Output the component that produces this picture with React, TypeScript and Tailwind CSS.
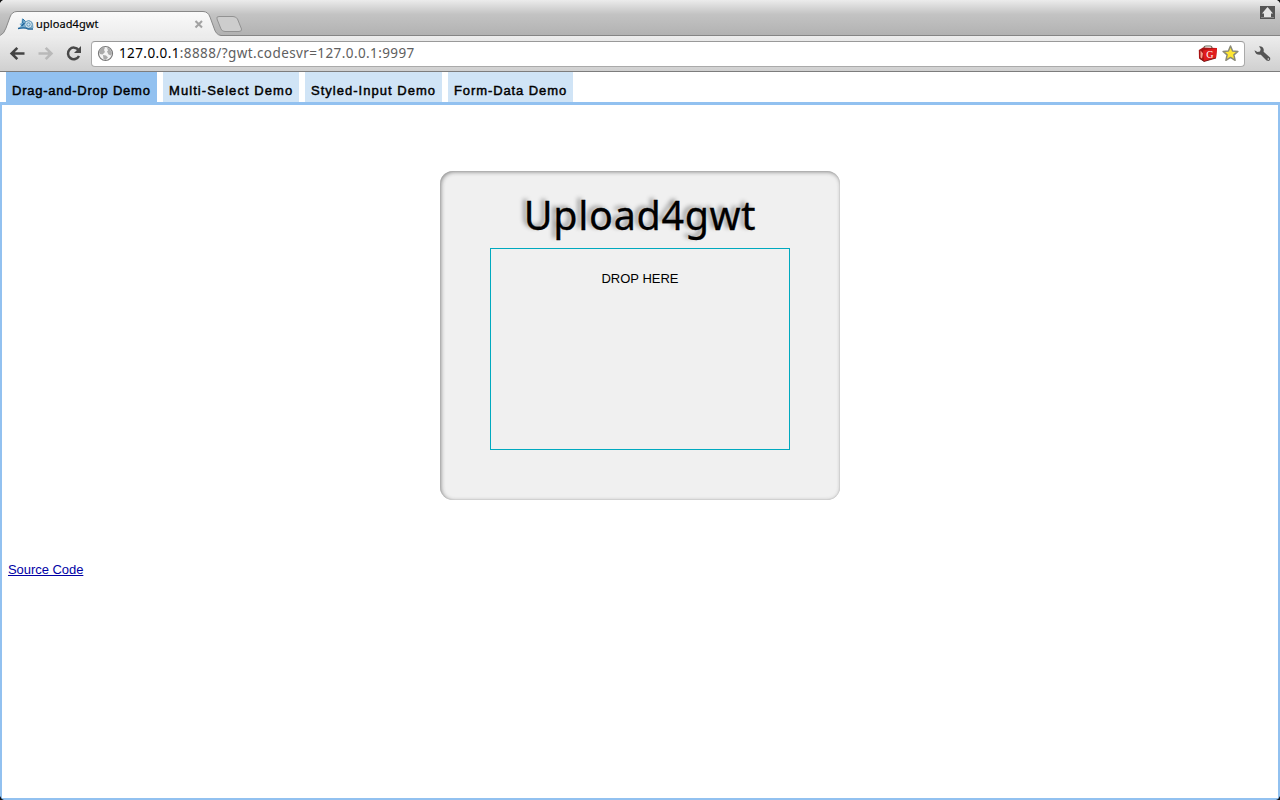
import React from "react";

const tabs = [
  { label: "Drag-and-Drop Demo", style: "w-[151px] bg-[#92c1f0] tracking-[0.76px]" },
  { label: "Multi-Select Demo", style: "w-[136px] bg-[#d0e4f6] tracking-[1.06px]" },
  { label: "Styled-Input Demo", style: "w-[137px] bg-[#d0e4f6] tracking-[1.02px]" },
  { label: "Form-Data Demo", style: "w-[125px] bg-[#d0e4f6] tracking-[0.9px]" },
];

function TabStrip() {
  return (
    <div className="relative h-9 bg-linear-to-b from-[#ececec] via-[#c3c3c3] via-40% to-[#b1b1b1]">
      <svg className="absolute inset-0" width="1280" height="36" viewBox="0 0 1280 36">
        <defs>
          <linearGradient id="tab" x1="0" y1="0" x2="0" y2="1">
            <stop offset="0" stopColor="#fafafa" />
            <stop offset="1" stopColor="#ececec" />
          </linearGradient>
        </defs>
        <path d="M0 0h3Q1 1 0 3zM1280 0h-3Q1279 1 1280 3z" fill="#111" />
        <path d="M0 35.5H1280" stroke="#858585" />
        <path d="M0 36V35Q4 34 6 28L10 17Q12 11.500 17 11.500H203Q208 11.500 210 17L214 28Q216 35 221 35.500V36z" fill="url(#tab)" />
        <path d="M0 35.500Q4 34 6 28L10 17Q12 11.500 17 11.500H203Q208 11.500 210 17L214 28Q216 35 221 35.500" fill="none" stroke="#888" />
        <path d="M219 16.500H233Q236 16.500 237.500 19L241.500 29Q242 31.500 239 31.500H225Q222 31.500 221 29L217 19Q216 16.500 219 16.500z" fill="#cdcdcd" stroke="#929292" />
        <path d="m195.500 21 6.500 6.500m0-6.500-6.500 6.500" stroke="#a2a2a2" strokeWidth="2.100" />
        <rect x="1260" y="6" width="15" height="13" fill="#555" />
        <path d="m1267.500 7 5.500 6.500h-2v3.500h-7v-3.500h-2z" fill="#e5e5e5" />
        <path d="M1261 17.500H1274" stroke="#888" />
        <g>
          <path d="m18.500 28.500 2.500-3-1.500-1.500 2-1 .5-5 4 3.500 3-1.500 4 3 .5 5z" fill="#78aed0" />
          <path d="m22.500 23 .5-4 3 3" stroke="#3077a8" fill="none" />
          <circle cx="28.500" cy="24.500" r="3.800" fill="#cfe2ee" stroke="#6d9cba" />
          <circle cx="28.500" cy="24.500" r="1.700" fill="none" stroke="#5b95ba" />
          <path d="M18 28.500q7-1.500 10 .5h5M21.500 26l3-3" stroke="#1f649a" strokeWidth="1.300" fill="none" />
        </g>
      </svg>
      <div className="relative pt-[17px] pl-9 font-['Noto_Sans','Open_Sans',sans-serif] text-[11px] leading-[14px] tracking-[0.1px] text-black [-webkit-text-stroke:0.15px_black]">upload4gwt</div>
    </div>
  );
}

function Toolbar() {
  return (
    <div className="flex h-9 items-center border-b border-[#7d7d7d] bg-linear-to-b from-[#ededed] to-[#d0d0d0]">
      <svg className="shrink-0" width="91" height="35" viewBox="0 36 91 35" fill="none">
        <path d="M24.500 53.500H12M17.300 47.800 11.600 53.500 17.300 59.200" stroke="#444" strokeWidth="2.600" />
        <path d="M38.500 53.500H51M45.700 47.800 51.400 53.500 45.700 59.200" stroke="#b9b9b9" strokeWidth="2.600" />
        <path d="M78.500 50A5.800 5.800 0 1 0 79 56" stroke="#484848" strokeWidth="2.500" />
        <path d="M81 46V53H74z" fill="#484848" />
      </svg>
      <div className="flex h-[26px] w-[1154px] items-center rounded-[4px] border border-[#aaa] border-t-[#999] bg-white">
        <svg className="ml-[5px] shrink-0" width="17" height="17" viewBox="0 0 17 17">
          <circle cx="8.500" cy="8.500" r="7" fill="#f4f4f4" stroke="#777" strokeWidth="1.200" />
          <path d="M3 4 6 2 8 2.500 7 5 8 7 5.500 9.500 3 9 2 7zM10 2.500l3 1.500 2 4-1 2.500-2.500-1L10 6.500l1-1zM6 10l3 .5 2 2-2.500 2.500-2-1z" fill="#aaa" />
        </svg>
        <div className="-mt-px ml-[5px] whitespace-nowrap font-['Noto_Sans','Open_Sans',sans-serif] text-[13.5px] leading-[18px] tracking-[0.4px] text-[#606060]">
          <span className="text-black">127.0.0.1</span>:8888/?gwt.codesvr=127.0.0.1:9997
        </div>
        <svg className="mr-[4px] ml-auto shrink-0" width="42" height="22" viewBox="0 0 42 22">
          <path d="M6 5.500V4.500Q6 3 8 3h4q2 0 2 2" fill="none" stroke="#665" strokeWidth="1.200" />
          <path d="m.8 7 4.200-2.500 14 .5-1 10-12 3.500-5-3z" fill="#a91414" />
          <path d="m5 7.500 14-2.500-1 10-12 3.500z" fill="#e01c1c" />
          <path d="m2.500 7.500 2.500 3-1 5-1.500-1z" fill="#f7a08c" />
          <path d="m2 15.500 4 3 12-3.500" fill="none" stroke="#651313" strokeWidth=".8" />
          <text x="8.200" y="14.500" fill="#fff" fontFamily="Liberation Serif, serif" fontSize="10">G</text>
          <path d="m32.500 3 2.100 5 5.300.4-4 3.500 1.200 5.400-4.600-2.900-4.600 2.900 1.200-5.400-4-3.500 5.300-.4z" fill="#ffe733" stroke="#8a8a78" strokeWidth="1.500" strokeLinejoin="round" />
        </svg>
      </div>
      <svg className="ml-[9px] shrink-0" width="18" height="18" viewBox="0 0 18 18">
        <path d="M5 1.200Q9.500 1 9.800 5L9.600 6.800 16 12.500Q17 15 14.500 16L12.500 15.500 6.800 9.700Q1.500 10.500.5 5.200L3.500 7 6 6.500 6.700 4z" fill="#555" />
        <circle cx="14.300" cy="14.100" r=".8" fill="#ddd" />
      </svg>
    </div>
  );
}

export default function App() {
  return (
    <div className="flex h-[800px] w-[1280px] flex-col overflow-hidden bg-white font-['Liberation_Sans',Arial,sans-serif] text-black">
      <TabStrip />
      <Toolbar />
      <nav className="flex h-[30px] shrink-0 gap-1.5 pl-1.5">
        {tabs.map((tab) => (
          <div key={tab.label} className={`${tab.style} shrink-0 whitespace-nowrap pt-[11px] pl-1.5 text-[13px] leading-[15px] [-webkit-text-stroke:0.45px_black]`}>
            {tab.label}
          </div>
        ))}
      </nav>
      <main className="relative flex grow flex-col border-2 border-t-3 border-[#92c1f0]">
        <section className="mx-auto mt-[66px] flex h-[329px] w-[400px] shrink-0 flex-col items-center rounded-[13px] bg-[#f0f0f0] shadow-[inset_1px_1px_4px_#888,inset_0_0_1px_#bbb]">
          <h1 className="mt-[17px] h-[60px] whitespace-nowrap font-['Noto_Sans','Open_Sans',sans-serif] text-[39.5px] leading-[54px] tracking-[0.65px] [-webkit-text-stroke:0.3px_black] [text-shadow:-4px_-2px_4px_#999]">Upload4gwt</h1>
          <div className="h-[202px] w-[300px] border border-[#00a9bf] pt-[22px] text-center text-[13px] leading-[15px]">DROP HERE</div>
        </section>
        <a href="#source" className="mt-[62px] ml-1.5 self-start text-[13px] leading-[15px] tracking-[-0.05px] text-[#0000a5] underline">Source Code</a>
        <svg className="absolute -bottom-0.5 -left-0.5" width="4" height="4"><path d="M0 0Q1 3 4 4H0z" fill="#111" /></svg>
        <svg className="absolute -right-0.5 -bottom-0.5" width="4" height="4"><path d="M4 0Q3 3 0 4H4z" fill="#111" /></svg>
      </main>
    </div>
  );
}
